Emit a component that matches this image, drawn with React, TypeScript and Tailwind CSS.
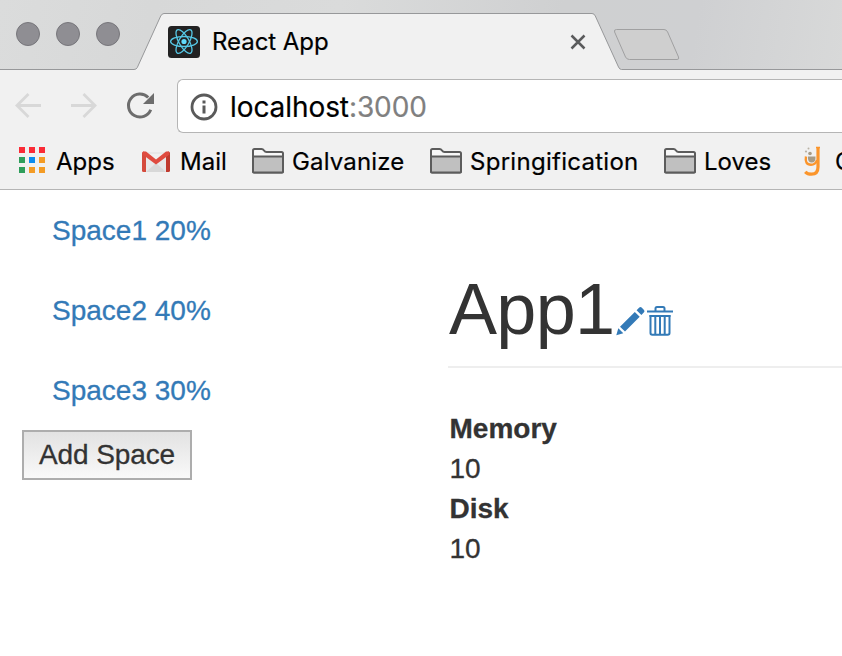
import type { ReactNode } from "react";

function ReactLogo() {
  return (
    <svg width="32" height="32" viewBox="0 0 32 32" className="shrink-0">
      <rect width="32" height="32" rx="3.5" fill="#222" />
      <g transform="translate(0 -0.500)" fill="none" stroke="#56c8e6" strokeWidth="1.3">
        <ellipse cx="16" cy="16" rx="13.4" ry="5" />
        <ellipse cx="16" cy="16" rx="13.4" ry="5" transform="rotate(60 16 16)" />
        <ellipse cx="16" cy="16" rx="13.4" ry="5" transform="rotate(120 16 16)" />
        <circle cx="16" cy="16" r="2.6" fill="#61dafb" stroke="none" />
      </g>
    </svg>
  );
}

function TabStrip() {
  return (
    <div className="relative flex h-[70px] items-start bg-[linear-gradient(100deg,#dbdcdc_0%,#d7d8d8_18%,#dadbdb_40%,#cfd0d1_66%,#cfd0d2_82%,#d8d9d9_100%)]">
      <svg width="842" height="70" viewBox="0 0 842 70" className="absolute left-0 top-0">
        <path d="M-2 69.500H134Q136.300 69.500 137.300 67.500L160.700 16Q162 13.500 164 13.500H592Q594.300 13.500 595.300 16L618.500 67Q619.500 69.500 621.500 69.500H844V72H-2Z" fill="#f1f1f1" stroke="#97989a" />
        <path d="M616.500 29.500H664Q666.500 29.500 667.600 32L678.500 57Q679.500 59.500 677 59.500H629.500Q626.800 59.500 625.500 57L614.600 32Q613.700 29.500 616.500 29.500Z" fill="#cfcfcf" stroke="#a0a0a1" />
      </svg>
      <div className="relative flex gap-4 pl-4 pt-[22px]">
        <i className="size-6 rounded-full border border-[#77767b] bg-[#8f8e93]" />
        <i className="size-6 rounded-full border border-[#77767b] bg-[#8f8e93]" />
        <i className="size-6 rounded-full border border-[#77767b] bg-[#8f8e93]" />
      </div>
      <div className="relative ml-12 flex h-8 w-[418px] mt-[26px] items-center">
        <ReactLogo />
        <span className="ml-3 text-[24px] leading-8 tracking-[-0.05px] text-black">React App</span>
        <svg width="16" height="16" viewBox="0 0 16 16" className="ml-auto" stroke="#5a5b5c" strokeWidth="2.5">
          <path d="M1.500 1.500l13 13M14.500 1.500l-13 13" />
        </svg>
      </div>
    </div>
  );
}

function Toolbar() {
  return (
    <div className="flex h-[70px] items-center pl-[14px]">
      <svg width="142" height="30" viewBox="0 0 142 30" fill="none" className="shrink-0">
        <g stroke="#d8d8d8" strokeWidth="2.8">
          <path d="M27 15.500H3M14.500 4L3 15.500 14.500 27" />
          <path d="M57 15.500h24M69.500 4L81 15.500 69.500 27" />
        </g>
        <path d="M136.700 19.700A11.500 11.500 0 1 1 134.200 7.500" stroke="#6d6d6d" strokeWidth="3" />
        <path d="M140 3v11h-11Z" fill="#6d6d6d" />
      </svg>
      <div className="ml-[21px] mt-[2px] flex h-[54px] flex-1 items-center rounded-l-[6px] border border-r-0 border-[#b5b5b5] bg-white pl-3">
        <svg width="28" height="28" viewBox="0 0 28 28" className="mt-[2px] shrink-0">
          <circle cx="14" cy="14" r="12" fill="none" stroke="#5a5a5a" strokeWidth="2.8" />
          <path d="M12.500 7.500h3v3h-3zM12.500 12.500h3v8h-3z" fill="#5a5a5a" />
        </svg>
        <span className="ml-3 mt-[2px] text-[28px] leading-9 tracking-[-0.08px] text-black">localhost<span className="text-[#808080]">:3000</span></span>
      </div>
    </div>
  );
}

function Folder() {
  return (
    <svg width="32" height="26" viewBox="0 0 32 26" stroke="#5c5c5c" strokeWidth="2">
      <path d="M1 2.500Q1 1 2.500 1H9.500Q11 1 12 2.500T14.500 4H29.500Q31 4 31 5.500V23.500Q31 24.500 30 24.500H2Q1 24.500 1 23.500Z" fill="#f8f8f8" />
      <path d="M1 8.500H31V23.500Q31 24.500 30 24.500H2Q1 24.500 1 23.500Z" fill="#c0c0c0" />
    </svg>
  );
}

function AppsIcon() {
  const colors = ["#fa2b36", "#fa2b36", "#fa2b36", "#2e9e5b", "#0a8cf0", "#f49c25", "#2e9e5b", "#f49c25", "#f49c25"];
  return (
    <svg width="26" height="26" viewBox="0 0 26 26" className="mb-[2px]">
      {colors.map((c, i) => (
        <rect key={i} x={(i % 3) * 10} y={Math.floor(i / 3) * 10} width="6" height="6" fill={c} />
      ))}
    </svg>
  );
}

function MailIcon() {
  return (
    <svg width="28" height="22" viewBox="0 0 28 22" className="mt-[2px]">
      <path d="M3 1h22v20H3Z" fill="#e8e8e8" />
      <path d="M4 21l10-9 10 9Z" fill="#d8d8d8" />
      <path d="M3 3h22L14 13Z" fill="#f1f1f1" />
      <path d="M0 2Q0 .500 2 .500L4 3V21H1.500Q0 21 0 19.500Z" fill="#d54b3d" />
      <path d="M28 2Q28 .500 26 .500L24 3V21h2.500Q28 21 28 19.500Z" fill="#c03a2e" />
      <path d="M.500 3.500L1 .500H4L14 8.500 24 .500h3l.500 3L14 13.500Z" fill="#df4b3f" />
    </svg>
  );
}

function FlaskG() {
  return (
    <svg width="18" height="32" viewBox="0 0 18 32" fill="none">
      <path d="M3 11.500Q1.500 19.800 8 19.800Q12.500 19.800 14 15" stroke="#fb952b" strokeWidth="2.400" />
      <path d="M15 2V22Q15 29.200 8.500 29.200Q4.500 29.200 2.200 26.800" stroke="#fb952b" strokeWidth="3.200" />
      <path d="M13 2.500H17" stroke="#fb952b" strokeWidth="1.500" />
      <path d="M5 11.500H12.500Q13 17.500 8.700 17.500T5 11.500Z" fill="#a69b87" />
      <circle cx="7" cy="8.500" r="1.800" fill="#a69b87" />
      <circle cx="3" cy="6.500" r="1.100" fill="#b9b2a5" />
      <circle cx="5.500" cy="3.500" r="1" fill="#b9b2a5" />
    </svg>
  );
}

function Bookmark({ icon, label, className }: { icon: ReactNode; label: string; className: string }) {
  return (
    <div className={`flex shrink-0 items-center whitespace-nowrap ${className}`}>
      <span className="shrink-0">{icon}</span>
      <span className="pt-[2px]">{label}</span>
    </div>
  );
}

function BookmarksBar() {
  return (
    <div className="flex h-[50px] items-center overflow-hidden border-b border-[#b5b5b5] pb-[8px] pl-[19px] text-[24px] leading-8 text-black [&_svg]:block">
      <Bookmark icon={<AppsIcon />} label="Apps" className="w-[123px] gap-[11px]" />
      <Bookmark icon={<MailIcon />} label="Mail" className="w-[110px] gap-[10px]" />
      <Bookmark icon={<Folder />} label="Galvanize" className="w-[178px] gap-2 tracking-[0.15px]" />
      <Bookmark icon={<Folder />} label="Springification" className="w-[234px] gap-2 tracking-[0.28px]" />
      <Bookmark icon={<Folder />} label="Loves" className="w-[139px] gap-2" />
      <Bookmark icon={<FlaskG />} label="G" className="gap-[14px]" />
    </div>
  );
}

function Pencil() {
  return (
    <svg width="30" height="30" viewBox="0 0 30 30" fill="#337ab7">
      <path d="M.300 29.300L2.300 22.300 7.300 27.200ZM4 20.700L18.800 5.900 23.700 10.800 9 25.600ZM20.600 4.200L23.300 1.500Q24.500.600 25.600 1.600L28 4Q29 5.200 28 6.300L25.400 9Z" />
    </svg>
  );
}

function Trash() {
  return (
    <svg width="26" height="31" viewBox="0 0 26 31" fill="none" stroke="#337ab7" strokeWidth="2">
      <path d="M0 6.500H26M8.500 6V3.500Q8.500 2 10 2H16Q17.500 2 17.500 3.500V6M2.500 11H23.500" />
      <path d="M3.500 10V28Q3.500 29.800 5.300 29.800H20.700Q22.500 29.800 22.500 28V10M8.300 11V29M13 11V29M17.700 11V29" />
    </svg>
  );
}

export default function App() {
  return (
    <div className="h-[656px] w-[842px] overflow-hidden bg-white">
      <header className="bg-[#f1f1f1] font-['Inter','Liberation_Sans',sans-serif] [-webkit-text-stroke:0.2px]">
        <TabStrip />
        <Toolbar />
        <BookmarksBar />
      </header>
      <main className="flex font-['Liberation_Sans',Arial,sans-serif] text-[28px] leading-10 text-[#333] [-webkit-text-stroke:0.3px]">
        <nav className="flex w-[448px] flex-col items-start pl-[22px] pt-[21px]">
          <ul className="flex flex-col gap-10 pl-[30px] text-[#337ab7]">
            <li><a>Space1 20%</a></li>
            <li><a>Space2 40%</a></li>
            <li><a>Space3 30%</a></li>
          </ul>
          <button className="mt-[19px] h-[50px] w-[170px] border-2 border-[#adadad] bg-linear-to-b from-[#e2e2e2] to-[#f9f9f9] leading-10 tracking-[-0.1px]">Add Space</button>
        </nav>
        <section className="flex-1">
          <div className="flex h-[178px] items-end border-b-2 border-[#eee] pb-[17px]">
            <h1 className="w-[168px] pl-px text-[72px] leading-[80px] tracking-[-0.7px] [-webkit-text-stroke:0]">App1</h1>
            <div className="flex items-end gap-px pb-[13px]">
              <Pencil />
              <Trash />
            </div>
          </div>
          <dl className="pl-[1.5px] pt-[41px]">
            <dt className="font-bold">Memory</dt>
            <dd>10</dd>
            <dt className="font-bold">Disk</dt>
            <dd>10</dd>
          </dl>
        </section>
      </main>
    </div>
  );
}
